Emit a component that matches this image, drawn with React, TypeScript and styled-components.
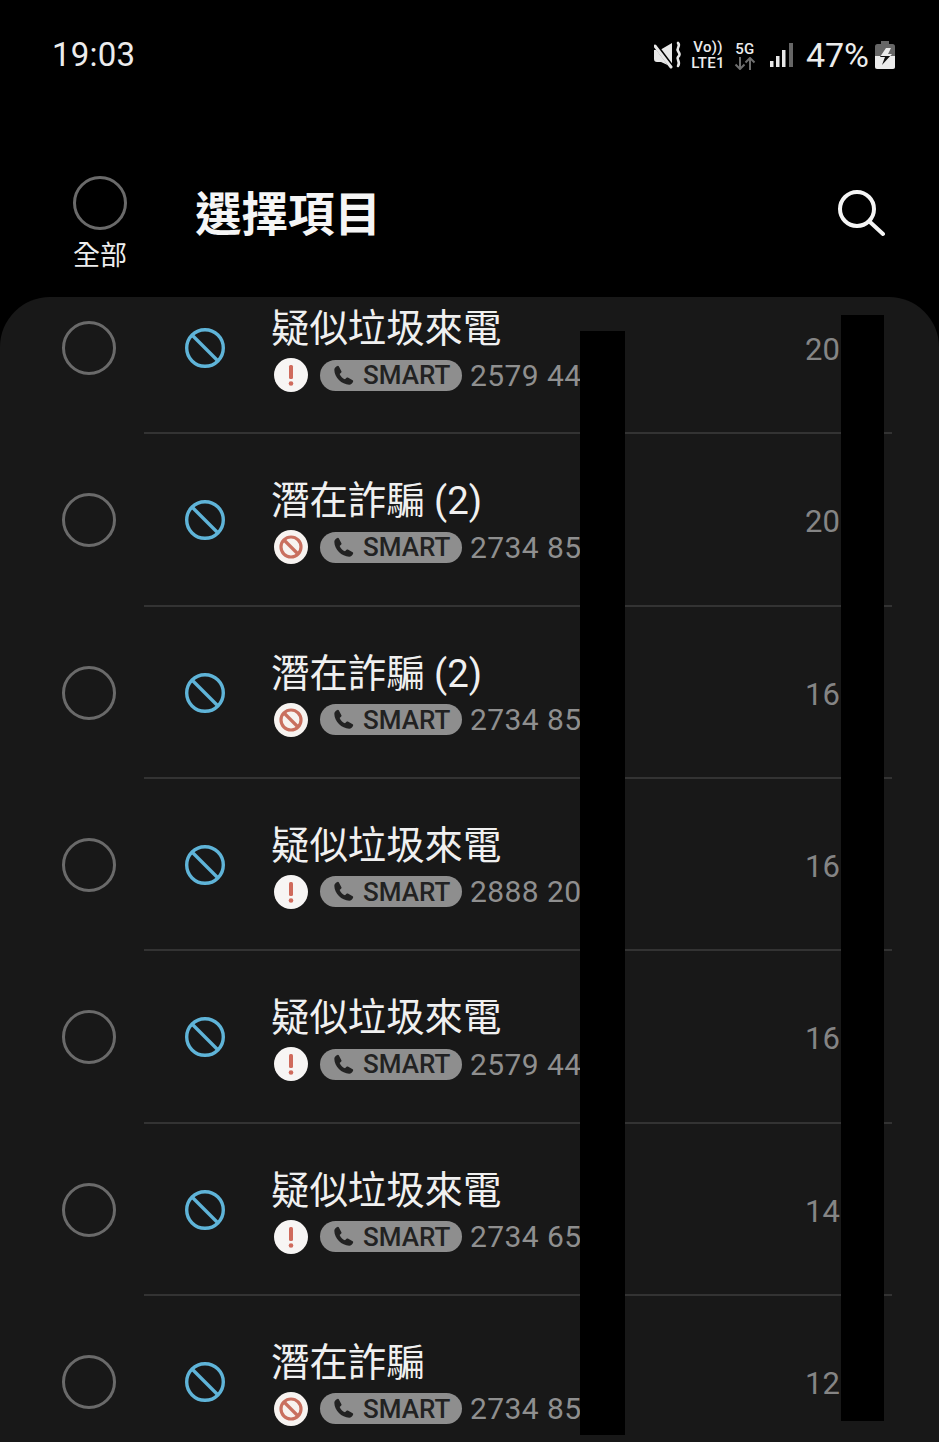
import React from 'react';
import styled, { createGlobalStyle } from 'styled-components';

const GlobalStyle = createGlobalStyle`
  html, body {
    margin: 0;
    padding: 0;
    background: #000;
  }
  body {
    font-family: Roboto, "Noto Sans CJK TC", sans-serif;
  }
`;

const Screen = styled.div`
  position: relative;
  width: 939px;
  height: 1442px;
  background: #000;
  overflow: hidden;
`;

const StatusBar = styled.div`
  height: 108px;
  padding: 0 44px 0 52px;
  display: flex;
  align-items: center;
  justify-content: space-between;
  color: #ececec;
  box-sizing: border-box;
`;

const Clock = styled.div`
  font-size: 33px;
  letter-spacing: 0.2px;
`;

const StatusIcons = styled.div`
  display: flex;
  align-items: center;
  margin-top: 2px;
`;

const NetStack = styled.div<{ $gap: number }>`
  display: flex;
  flex-direction: column;
  align-items: center;
  margin-left: ${({ $gap }) => $gap}px;
  font-size: 15px;
  font-weight: 500;
  line-height: 16px;
  letter-spacing: 0.3px;
`;

const Battery = styled.div`
  font-size: 34px;
  margin-left: 12px;
`;

const Header = styled.header`
  height: 189px;
  display: flex;
  position: relative;
`;

const SelectAll = styled.div`
  width: 54px;
  margin: 68px 0 0 73px;
  display: flex;
  flex-direction: column;
  align-items: center;
  gap: 10px;
`;

const AllLabel = styled.div`
  font-size: 27px;
  line-height: 32px;
  color: #eee;
  white-space: nowrap;
`;

const Ring = styled.div`
  width: 54px;
  height: 54px;
  box-sizing: border-box;
  border: 3px solid #6a6a6a;
  border-radius: 50%;
  flex: none;
`;

const Title = styled.h1`
  margin: 77px 0 0 68px;
  font-size: 46.5px;
  line-height: 60px;
  font-weight: 700;
  color: #f5f5f5;
`;

const SearchButton = styled.div`
  margin: 82px 0 0 auto;
  padding-right: 54px;
`;

const Panel = styled.main`
  height: 1145px;
  background: #181818;
  border-radius: 50px 50px 0 0;
  overflow: hidden;
`;

const List = styled.div`
  margin-top: -35px;
`;

const Row = styled.div`
  height: 170.33px;
  box-sizing: border-box;
  padding: 2px 0 0 62px;
  display: flex;
  align-items: center;
`;

const BlockSlot = styled.div`
  width: 40px;
  height: 40px;
  margin: 0 46px 0 69px;
  flex: none;
`;

const Info = styled.div`
  width: 534px;
  flex: none;
  align-self: flex-start;
  padding-top: 42px;
`;

const Name = styled.div`
  font-size: 38.4px;
  line-height: 46px;
  color: #f0f0f0;
  white-space: nowrap;
`;

const Details = styled.div`
  display: flex;
  align-items: center;
  margin: 6px 0 0 3px;
  height: 34px;
`;

const Badge = styled.div`
  display: flex;
  align-items: center;
  height: 31px;
  width: 142px;
  box-sizing: border-box;
  margin-left: 12px;
  padding-left: 13px;
  border-radius: 15.5px;
  background: #8e8e8e;
  color: #222;
  font-size: 26px;
  font-weight: 500;
`;

const BadgeText = styled.span`
  margin-left: 9px;
`;

const Number = styled.div`
  margin-left: 8px;
  font-size: 30px;
  color: #8f8f8f;
  letter-spacing: 0.4px;
  white-space: nowrap;
`;

const Time = styled.div`
  font-size: 31px;
  color: #858585;
  margin-top: 3px;
`;

const Separator = styled.div`
  height: 2px;
  margin: 0 47px 0 144px;
  background: #333;
`;

const Redaction = styled.div<{ $left: number; $top: number; $width: number; $height: number }>`
  position: absolute;
  left: ${({ $left }) => $left}px;
  top: ${({ $top }) => $top}px;
  width: ${({ $width }) => $width}px;
  height: ${({ $height }) => $height}px;
  background: #000;
`;

const MuteIcon = () => (
  <svg width="28" height="28" viewBox="0 0 28 28" fill="none">
    <path d="M0 9h6l12-7v24L7 21H3a3 3 0 0 1-3-3z" fill="#e8e8e8" />
    <path d="M0 2l18 24" stroke="#000" strokeWidth="4.500" />
    <path d="M1 5l16 21" stroke="#e8e8e8" strokeWidth="3" strokeLinecap="round" />
    <path d="M24 2c3 3-2 5 0 8s2 4 0 6 3 5 0 9" stroke="#e8e8e8" strokeWidth="2.600" strokeLinecap="round" />
  </svg>
);

const Arrows = () => (
  <svg width="22" height="13" viewBox="0 0 22 13" fill="none" stroke="#6e6e6e" strokeWidth="2">
    <path d="M6 0v12M1.500 7.500L6 12l4.500-4.500" />
    <path d="M16 13V1M11.500 5.500L16 1l4.500 4.500" />
  </svg>
);

const SignalIcon = () => (
  <svg width="24" height="26" viewBox="0 0 24 26" style={{ marginLeft: 14 }}>
    <rect x="0" y="19" width="3.500" height="6" fill="#e8e8e8" />
    <rect x="6" y="14" width="3.500" height="11" fill="#e8e8e8" />
    <rect x="12" y="8" width="3.500" height="17" fill="#e8e8e8" />
    <rect x="19" y="1" width="4" height="24" fill="#666" />
  </svg>
);

const BatteryIcon = () => (
  <svg width="20" height="28" viewBox="0 0 20 28" style={{ marginLeft: 6 }}>
    <defs>
      <clipPath id="batt-top">
        <rect x="0" y="0" width="20" height="15" />
      </clipPath>
      <clipPath id="batt-bottom">
        <rect x="0" y="15" width="20" height="13" />
      </clipPath>
    </defs>
    <rect x="6" y="0" width="8" height="3" fill="#666" />
    <rect x="0" y="3" width="20" height="25" rx="2.500" fill="#666" />
    <path d="M0 15h20v10.500a2.500 2.500 0 0 1-2.500 2.500h-15A2.500 2.500 0 0 1 0 25.500z" fill="#ececec" />
    <path d="M11 7h5l-3 6h4l-10 11 3-8H5z" fill="#ececec" clipPath="url(#batt-top)" />
    <path d="M11 7h5l-3 6h4l-10 11 3-8H5z" fill="#111" clipPath="url(#batt-bottom)" />
  </svg>
);

const SearchIcon = () => (
  <svg width="48" height="48" viewBox="0 0 48 48" fill="none" stroke="#f5f5f5" strokeWidth="4" strokeLinecap="round">
    <circle cx="20" cy="19" r="17" />
    <path d="M33 32l13 12" />
  </svg>
);

const BlockIcon = () => (
  <svg width="40" height="40" viewBox="0 0 40 40" fill="none" stroke="#5fb4d8" strokeWidth="3.400">
    <circle cx="20" cy="20" r="18.300" />
    <path d="M7 7l26 26" />
  </svg>
);

const AlertIcon = () => (
  <svg width="34" height="34" viewBox="0 0 34 34">
    <circle cx="17" cy="17" r="17" fill="#f7f5f4" />
    <rect x="15" y="7" width="4" height="14" rx="1.500" fill="#cf6a5c" />
    <circle cx="17" cy="25.500" r="2.300" fill="#cf6a5c" />
  </svg>
);

const ScamIcon = () => (
  <svg width="34" height="34" viewBox="0 0 34 34" fill="none">
    <circle cx="17" cy="17" r="17" fill="#f7f3f0" />
    <circle cx="17" cy="17" r="10" stroke="#c9705f" strokeWidth="3.200" />
    <path d="M10 10l14 14" stroke="#c9705f" strokeWidth="3.200" />
  </svg>
);

const PhoneIcon = () => (
  <svg width="21" height="21" viewBox="0 0 24 24" fill="#222">
    <path d="M6.600 1.500l3 5.500c.3.500.2 1.100-.2 1.500L7.600 10.300c1.200 2.800 3.300 4.900 6.100 6.100l1.800-1.800c.4-.4 1-.5 1.500-.2l5.500 3c.5.300.7.900.5 1.400-.6 2-2.400 3.700-4.500 3.700C10 22.500 1.500 14 1.500 5.500 1.500 3.400 3.200 1.600 5.200 1c.5-.2 1.100 0 1.400.5z" />
  </svg>
);

interface CallEntry {
  name: string;
  kind: 'alert' | 'scam';
  number: string;
  time: string;
}

const calls: CallEntry[] = [
  { name: '疑似垃圾來電', kind: 'alert', number: '2579 44', time: '20' },
  { name: '潛在詐騙 (2)', kind: 'scam', number: '2734 85', time: '20' },
  { name: '潛在詐騙 (2)', kind: 'scam', number: '2734 85', time: '16' },
  { name: '疑似垃圾來電', kind: 'alert', number: '2888 20', time: '16' },
  { name: '疑似垃圾來電', kind: 'alert', number: '2579 44', time: '16' },
  { name: '疑似垃圾來電', kind: 'alert', number: '2734 65', time: '14' },
  { name: '潛在詐騙', kind: 'scam', number: '2734 85', time: '12' },
];

export default function App() {
  return (
    <Screen>
      <GlobalStyle />
      <StatusBar>
        <Clock>19:03</Clock>
        <StatusIcons>
          <MuteIcon />
          <NetStack $gap={9}>
            <span>Vo))</span>
            <span>LTE1</span>
          </NetStack>
          <NetStack $gap={9}>
            <span>5G</span>
            <Arrows />
          </NetStack>
          <SignalIcon />
          <Battery>47%</Battery>
          <BatteryIcon />
        </StatusIcons>
      </StatusBar>
      <Header>
        <SelectAll>
          <Ring />
          <AllLabel>全部</AllLabel>
        </SelectAll>
        <Title>選擇項目</Title>
        <SearchButton>
          <SearchIcon />
        </SearchButton>
      </Header>
      <Panel>
        <List>
          {calls.map((call, i) => (
            <React.Fragment key={i}>
              <Row>
                <Ring />
                <BlockSlot>
                  <BlockIcon />
                </BlockSlot>
                <Info>
                  <Name>{call.name}</Name>
                  <Details>
                    {call.kind === 'alert' ? <AlertIcon /> : <ScamIcon />}
                    <Badge>
                      <PhoneIcon />
                      <BadgeText>SMART</BadgeText>
                    </Badge>
                    <Number>{call.number}</Number>
                  </Details>
                </Info>
                <Time>{call.time}</Time>
              </Row>
              <Separator />
            </React.Fragment>
          ))}
        </List>
      </Panel>
      <Redaction $left={580} $top={331} $width={45} $height={1104} />
      <Redaction $left={841} $top={315} $width={43} $height={1106} />
    </Screen>
  );
}
